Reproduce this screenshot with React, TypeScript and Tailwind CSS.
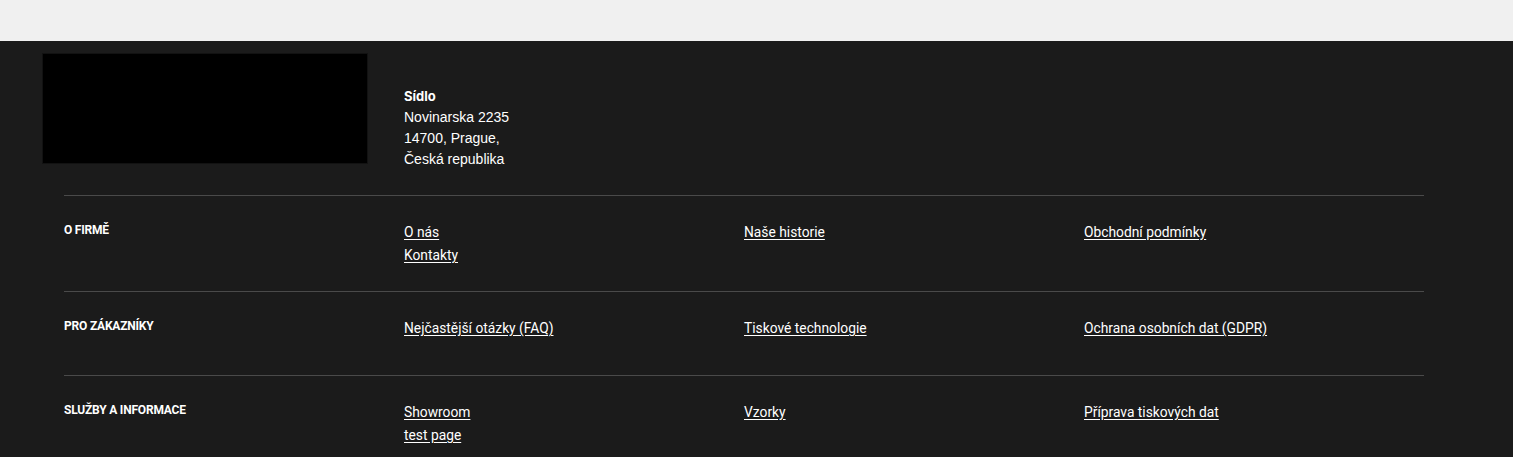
const sections = [
  {
    title: "O FIRMĚ",
    cols: [["O nás", "Kontakty"], ["Naše historie"], ["Obchodní podmínky"]],
  },
  {
    title: "PRO ZÁKAZNÍKY",
    cols: [["Nejčastější otázky (FAQ)"], ["Tiskové technologie"], ["Ochrana osobních dat (GDPR)"]],
  },
  {
    title: "SLUŽBY A INFORMACE",
    cols: [["Showroom", "test page"], ["Vzorky"], ["Příprava tiskových dat"]],
  },
];

export default function App() {
  return (
    <div className="min-h-[457px] bg-[#1b1b1b]">
      <div className="h-[41px] bg-[#f0f0f0]" />

      <footer className="w-[1360px] ml-[64px]">
        <div className="grid grid-cols-[340px_340px_340px_340px] pt-[12px] pb-[25px]">
          <div className="-ml-[22px] w-[326px] h-[111px] bg-black border border-[#121212]" />
          <div className="pt-[33px] text-[14px] leading-[21px] text-white font-['Liberation_Sans',Arial,sans-serif]">
            <p className="font-bold font-['Inter',sans-serif] text-[13px]">Sídlo</p>
            <p>Novinarska 2235</p>
            <p>14700, Prague,</p>
            <p>Česká republika</p>
          </div>
        </div>

        {sections.map((s) => (
          <div
            key={s.title}
            className="grid grid-cols-[340px_340px_340px_340px] border-t border-[#4a4a4a] pt-[25px] pb-[24px]"
          >
            <h3 className="-mt-[1px] text-[12px] leading-[20px] font-bold tracking-[-0.2px] text-white font-['Roboto',sans-serif]">
              {s.title}
            </h3>
            {s.cols.map((links, i) => (
              <ul key={i} className="min-h-[34px] font-['Roboto',sans-serif] text-[13.8px] leading-[23px]">
                {links.map((l) => (
                  <li key={l}>
                    <a href="#" className="text-white underline underline-offset-2">
                      {l}
                    </a>
                  </li>
                ))}
              </ul>
            ))}
          </div>
        ))}
      </footer>
    </div>
  );
}
